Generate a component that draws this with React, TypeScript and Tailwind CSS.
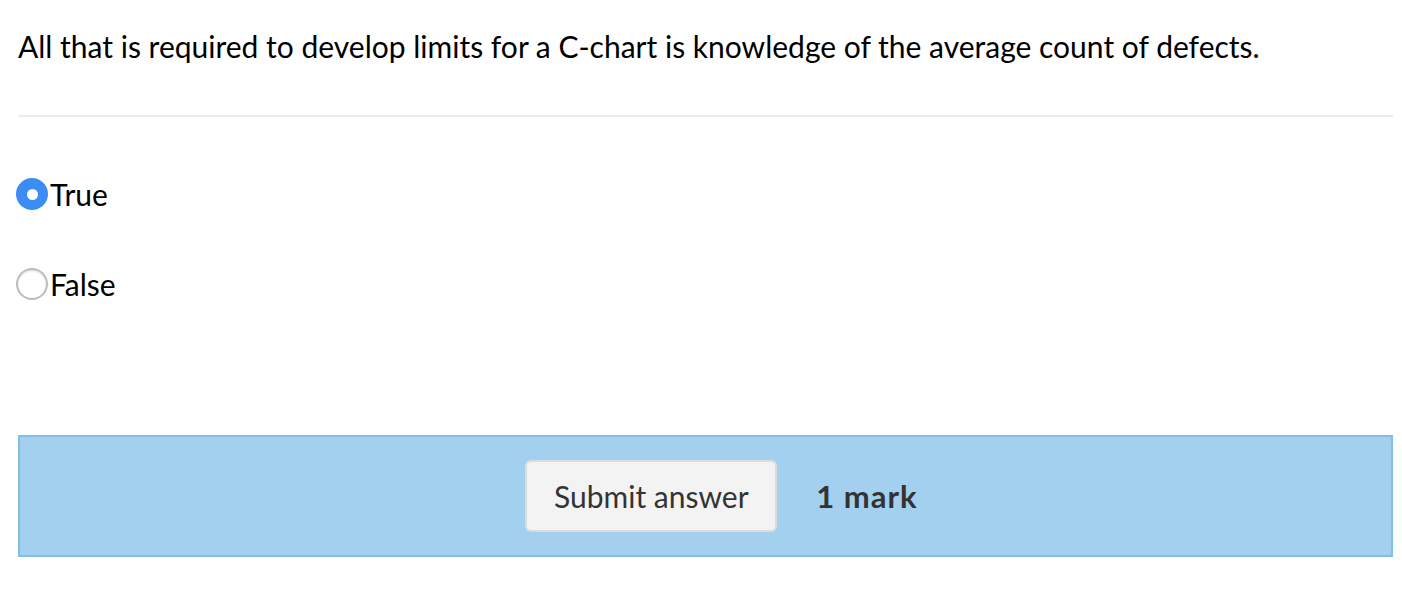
import { useState } from 'react';

const options = ['True', 'False'];

export default function App() {
  const [choice, setChoice] = useState('True');

  return (
    <div className="min-h-[614px] bg-white pl-[18px] pr-[9px] pt-[22px] text-black" style={{ fontFamily: 'Lato, "Noto Sans", sans-serif' }}>
      {/* Question */}
      <p className="text-[30px] leading-[48px]">
        All that is required to develop limits for a C-chart is knowledge of the average count of defects.
      </p>

      <hr className="mt-[45px] border-t-2 border-[#ececec]" />

      {/* Options */}
      <div className="mt-[57px] flex flex-col gap-[50px]">
        {options.map(opt => {
          const checked = choice === opt;
          return (
            <label key={opt} className="flex h-[40px] cursor-pointer items-center" onClick={() => setChoice(opt)}>
              {checked ? (
                <span className="ml-[-2px] flex h-[32px] w-[32px] items-center justify-center rounded-full bg-[#3b8cf5]">
                  <span className="h-[11px] w-[11px] rounded-full bg-white" />
                </span>
              ) : (
                <span className="ml-[-2px] h-[32px] w-[32px] rounded-full border-2 border-[#bdbdbd] bg-white shadow-[inset_0_1px_2px_rgba(0,0,0,0.15)]" />
              )}
              <span className="ml-[2px] text-[30px]">{opt}</span>
            </label>
          );
        })}
      </div>

      {/* Submit bar */}
      <div className="mt-[131px] flex h-[122px] items-center justify-center gap-[39px] border-2 border-[#80c0e8] bg-[#a3d0ee] pl-[32px]">
        <button className="h-[72px] w-[252px] rounded-[6px] border-2 border-[#dcdcdc] bg-[#f3f3f3] text-[30px] text-[#333]">
          Submit answer
        </button>
        <span className="text-[31px] font-bold tracking-[1px] text-[#333]">1 mark</span>
      </div>
    </div>
  );
}
